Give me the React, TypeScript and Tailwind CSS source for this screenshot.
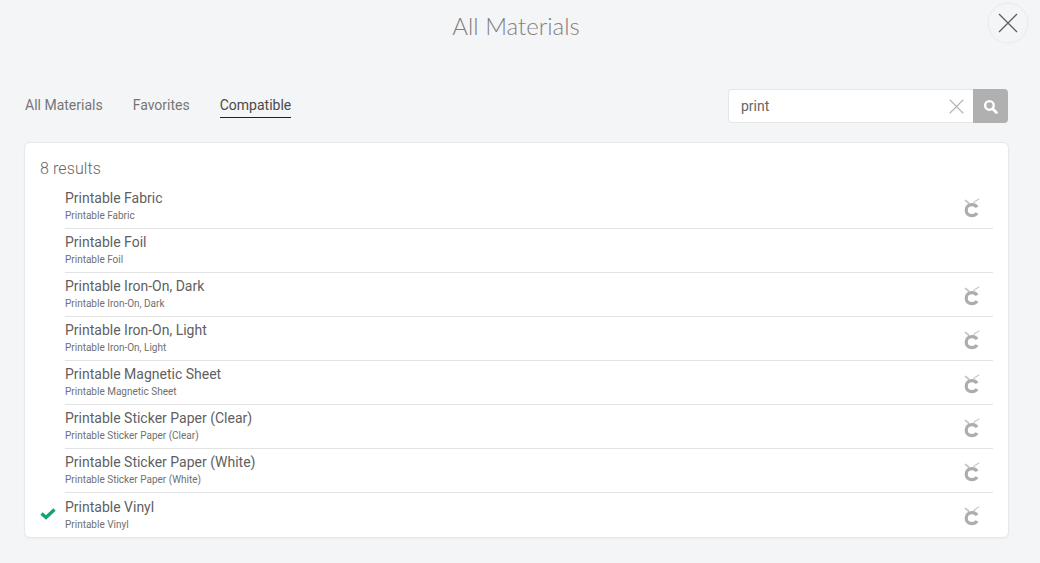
const rows = [
  { name: "Printable Fabric", icon: true },
  { name: "Printable Foil", icon: false },
  { name: "Printable Iron-On, Dark", icon: true },
  { name: "Printable Iron-On, Light", icon: true },
  { name: "Printable Magnetic Sheet", icon: true },
  { name: "Printable Sticker Paper (Clear)", icon: true },
  { name: "Printable Sticker Paper (White)", icon: true },
  { name: "Printable Vinyl", icon: true, checked: true },
];

function MachineIcon() {
  return (
    <svg width="18" height="21" viewBox="0 0 18 21" fill="none" className="block">
      <path d="M3.5 3.5 C4.5 4 5.5 5 6.5 6" stroke="#c4c4c4" strokeWidth="1.8" strokeLinecap="round" />
      <path d="M17 2 Q13 3.5 10.5 7.5" stroke="#c4c4c4" strokeWidth="1.1" strokeLinecap="round" />
      <path d="M15 10.2 C14 8.4 12.2 7.6 10 7.6 C6.4 7.6 4.2 10 4.2 13.2 C4.2 16.4 6.4 18.6 10 18.6 C12.2 18.6 14 17.8 15 16" stroke="#adadad" strokeWidth="3.2" />
    </svg>
  );
}

function XIcon({ size, color, width = 1.3 }: { size: number; color: string; width?: number }) {
  return (
    <svg width={size} height={size} viewBox="0 0 20 20" className="block">
      <path d="M1 1 L19 19 M19 1 L1 19" stroke={color} strokeWidth={width} fill="none" />
    </svg>
  );
}

export default function App() {
  return (
    <div className="w-[1040px] h-[563px] overflow-hidden bg-[#f4f5f7] font-['Roboto',sans-serif] text-[#5f5f5f]">
      <header className="relative h-[54px] pr-[8px]">
        <h1 className="pt-[11px] text-center text-[24px] leading-[30px] font-light font-['Lato',sans-serif] text-[#808080]">
          All Materials
        </h1>
        <button className="absolute left-[987px] top-[2px] w-[42px] h-[42px] rounded-full border-2 border-[#eeeff1] flex items-center justify-center">
          <XIcon size={20} color="#5f5f5f" />
        </button>
      </header>

      <nav className="mt-[35px] h-[34px] pl-[25px] pr-[32px] flex items-center justify-between">
        <div className="flex gap-[30px] text-[14px] leading-[24px] text-[#757575] mt-[-2px]">
          <span>All Materials</span>
          <span>Favorites</span>
          <span className="relative text-[#4a4a4a]">
            Compatible
            <span className="absolute left-0 right-0 bottom-[-1px] h-px bg-[#222]" />
          </span>
        </div>
        <div className="flex w-[280px] h-[34px]">
          <div className="flex-1 flex items-center justify-between bg-white border border-[#e4e6e9] border-r-0 rounded-l-[4px] pl-[12px] pr-[9px] text-[14px] text-[#666]">
            <span>print</span>
            <XIcon size={15} color="#b3b3b3" width={1.5} />
          </div>
          <div className="w-[35px] bg-[#b0b0b0] rounded-r-[4px] flex items-center justify-center">
            <svg width="15" height="15" viewBox="0 0 14 14" fill="none">
              <circle cx="6" cy="6" r="4" stroke="#fff" strokeWidth="2.2" />
              <path d="M9 9 L12.5 12.5" stroke="#fff" strokeWidth="2.6" strokeLinecap="round" />
            </svg>
          </div>
        </div>
      </nav>

      <main className="ml-[24px] mt-[19px] w-[985px] h-[396px] bg-white border border-[#e6e8eb] rounded-[6px] pt-[16px] pl-[15px] pr-[15px] shadow-[0_1px_2px_rgba(0,0,0,0.04)]">
        <div className="text-[16px] leading-[20px] font-light tracking-[0.1px] text-[#666]">8 results</div>
        <ul className="mt-[6px]">
          {rows.map((r, i) => (
            <li key={r.name} className="relative h-[44px] pl-[25px]">
              <div className={`h-full flex items-start justify-between ${i < rows.length - 1 ? "border-b border-[#e3e3e3]" : ""}`}>
                <div className={i === rows.length - 1 ? "pt-[4px]" : "pt-[3px]"}>
                  <div className="text-[14px] leading-[20px] text-[#5f5f5f]">{r.name}</div>
                  <div className="text-[10px] leading-[14px] mt-[1px] text-[#707070]">{r.name}</div>
                </div>
                {r.icon && (
                  <div className="mt-[12px] mr-[13px]">
                    <MachineIcon />
                  </div>
                )}
              </div>
              {r.checked && (
                <svg width="16" height="13" viewBox="0 0 16 13" className="absolute left-0 top-[14px]">
                  <path d="M1.5 6.5 L6 10.5 L14.5 2.5" stroke="#12a376" strokeWidth="3.4" fill="none" />
                </svg>
              )}
            </li>
          ))}
        </ul>
      </main>
    </div>
  );
}
